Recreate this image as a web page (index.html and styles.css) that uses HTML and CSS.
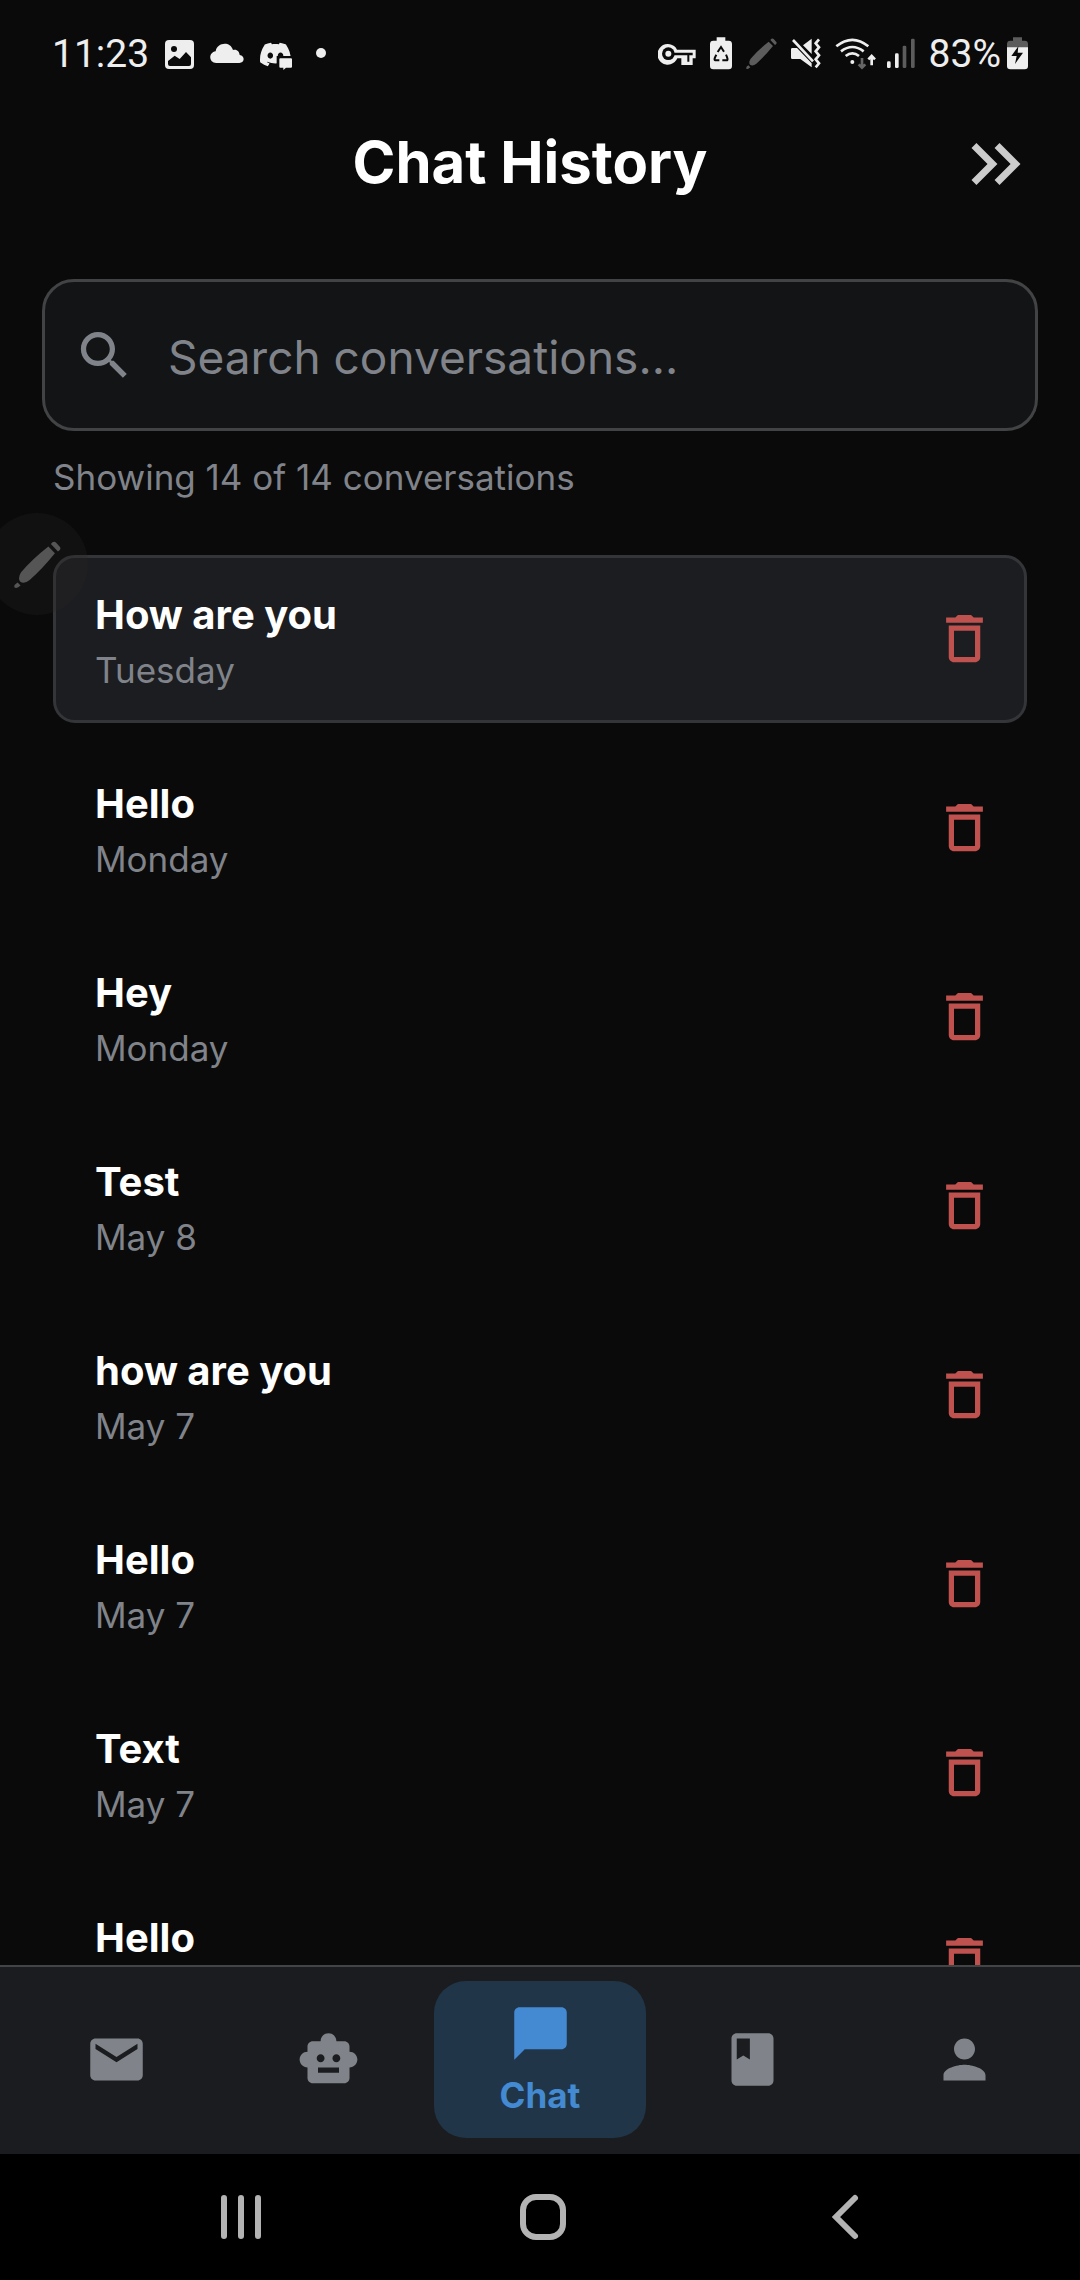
FILE: index.html
```html
<!DOCTYPE html>
<html lang="en">
<head>
<meta charset="utf-8">
<meta name="viewport" content="width=device-width, initial-scale=1">
<title>Chat History</title>
<link rel="stylesheet" href="styles.css">
</head>
<body>
<svg class="sprite" aria-hidden="true">
  <symbol id="trash" viewBox="0 0 24 24"><path d="M16 9v10H8V9zm-1.500-6h-5l-1 1H5v2h14V4h-3.500zM18 7H6v12c0 1.100.9 2 2 2h8c1.100 0 2-.9 2-2z"/></symbol>
  <symbol id="pen" viewBox="0 0 93 93"><path d="M68 11L81 24Q55 56 31 77Q20 86 12 80Q7 73 14 62Q36 36 68 11zM73 6Q78-1 83 3L91 12Q94 17 87 21zM7 82L13 88Q6 95 1 92Q-1 87 7 82z"/></symbol>
</svg>

<header class="status">
  <div class="status-left">
    <time class="clock">11:23</time>
    <svg class="s-image" viewBox="0 0 87 102"><rect y="12" width="87" height="87" rx="12"/><g class="cut"><circle cx="27" cy="39" r="9"/><path d="M9 84V75L29 59 44 69 63 48 78 64V84Q78 90 72 90H15Q9 90 9 84z"/></g></svg>
    <svg class="s-cloud" viewBox="0 0 102 102"><path d="M19 81C-5 81-5 49 17 46 21 20 60 14 69 42 80 38 88 46 89 57 106 60 104 81 88 81z"/></svg>
    <svg class="s-discord" viewBox="0 0 96 102"><path transform="translate(0 9) scale(3.85)" d="M20.317 4.370a19.791 19.791 0 0 0-4.885-1.515.074.074 0 0 0-.079.037c-.211.375-.445.865-.608 1.250-1.845-.276-3.680-.276-5.487 0-.164-.393-.406-.874-.618-1.250a.077.077 0 0 0-.078-.037 19.736 19.736 0 0 0-4.885 1.515.070.070 0 0 0-.032.028C.533 9.046-.319 13.580.099 18.058a.082.082 0 0 0 .031.056c2.053 1.508 4.041 2.423 5.993 3.029a.078.078 0 0 0 .084-.028c.462-.630.873-1.295 1.226-1.994a.076.076 0 0 0-.042-.106c-.653-.248-1.274-.550-1.872-.892a.077.077 0 0 1-.008-.128c.126-.094.252-.192.372-.291a.074.074 0 0 1 .078-.011c3.928 1.793 8.180 1.793 12.061 0l.079.010c.120.099.246.198.373.292a.077.077 0 0 1-.007.128 12.299 12.299 0 0 1-1.873.891.077.077 0 0 0-.041.107c.360.698.772 1.363 1.225 1.993a.076.076 0 0 0 .084.029c1.961-.607 3.950-1.522 6.002-3.029a.077.077 0 0 0 .031-.055c.500-5.177-.838-9.674-3.549-13.660zM8.020 15.331c-1.183 0-2.157-1.086-2.157-2.419s.956-2.419 2.157-2.419c1.211 0 2.176 1.095 2.157 2.419 0 1.333-.956 2.419-2.157 2.419zm7.975 0c-1.183 0-2.157-1.086-2.157-2.419s.955-2.419 2.157-2.419c1.211 0 2.176 1.095 2.157 2.419 0 1.333-.946 2.419-2.157 2.419z"/><path class="cut" d="M50 60H96V102H50z"/><path d="M61 67H93Q96 67 96 70V92Q96 95 93 95H78L70 102V95H61Q58 95 58 92V70Q58 67 61 67z"/></svg>
    <span class="dot"></span>
  </div>
  <div class="status-right">
    <svg class="s-key" viewBox="0 0 114 102"><path d="M57 41H113V67H104V87H70V67H58A31 31 0 1 1 57 41z"/><circle class="cut" cx="31" cy="53" r="19"/><path class="cut" d="M46 50H104V58H94V77H88V58H46z"/><circle cx="31" cy="53" r="9"/></svg>
    <svg class="s-saver" viewBox="0 0 66 102"><path d="M20 4H46V14H56Q66 14 66 24V90Q66 100 56 100H10Q0 100 0 90V24Q0 14 10 14H20z"/><path class="cut-line" d="M23 48L33 33 42 47M48 56Q56 73 50 73H37M28 73H16Q10 72 19 56"/></svg>
    <svg class="s-pen"><use href="#pen"/></svg>
    <svg class="s-mute" viewBox="0 0 90 102"><path d="M0 40Q0 36 4 36H18L62 82V94L28 69H4Q0 69 0 65zM36 28L62 8V54z"/><path class="line" d="M6 12L66 76M84 10L74 22 84 34 74 46 84 58 74 70 84 82 74 94"/></svg>
    <svg class="s-wifi" viewBox="0 0 126 102"><path class="line" d="M4 31Q52-8 100 31M18 46Q52 20 86 46M32 60Q52 44 72 60"/><circle cx="52" cy="78" r="6"/><path class="line" d="M110 88V60M100 70L110 60 120 70"/><path class="line faint" d="M81 66V95M71 85L81 95 91 85"/></svg>
    <svg class="s-signal" viewBox="0 0 84 102"><rect y="76" width="11" height="20" rx="4"/><rect x="24" y="52" width="11" height="44" rx="4"/><rect class="faint-fill" x="47" y="29" width="11" height="67" rx="4"/><rect class="faint-fill" x="72" y="8" width="11" height="88" rx="4"/></svg>
    <span class="battery-text">83%</span>
    <svg class="s-battery" viewBox="0 0 63 102"><path class="faint-fill" d="M18 4H45V14H53Q63 14 63 24V40H0V24Q0 14 10 14H18z"/><path d="M0 34H63V90Q63 100 53 100H10Q0 100 0 90z"/><path class="cut" d="M34 31L13 60H29L24 84 48 50H32z"/></svg>
  </div>
</header>

<header class="app-bar">
  <h1>Chat History</h1>
  <button class="expand" aria-label="Close history"><svg viewBox="0 0 24 24"><path d="M6.410 6 5 7.410 9.580 12 5 16.590 6.410 18l6-6zM13 6 11.590 7.410 16.170 12 11.590 16.590 13 18l6-6z"/></svg></button>
</header>

<main>
  <label class="search">
    <svg class="icon" viewBox="0 0 24 24"><path d="M15.500 14h-.790l-.280-.270C15.410 12.590 16 11.110 16 9.500 16 5.910 13.090 3 9.500 3S3 5.910 3 9.500 5.910 16 9.500 16c1.610 0 3.090-.590 4.230-1.570l.270.280v.790l5 4.990L20.490 19zm-6 0C7.010 14 5 11.990 5 9.500S7.010 5 9.500 5 14 7.010 14 9.500 11.990 14 9.500 14"/></svg>
    <input type="search" placeholder="Search conversations..." aria-label="Search conversations">
  </label>
  <p class="count">Showing 14 of 14 conversations</p>
  <ul class="list">
    <li class="item selected"><div><h2>How are you</h2><p>Tuesday</p></div><button aria-label="Delete conversation"><svg class="icon"><use href="#trash"/></svg></button></li>
    <li class="item"><div><h2>Hello</h2><p>Monday</p></div><button aria-label="Delete conversation"><svg class="icon"><use href="#trash"/></svg></button></li>
    <li class="item"><div><h2>Hey</h2><p>Monday</p></div><button aria-label="Delete conversation"><svg class="icon"><use href="#trash"/></svg></button></li>
    <li class="item"><div><h2>Test</h2><p>May 8</p></div><button aria-label="Delete conversation"><svg class="icon"><use href="#trash"/></svg></button></li>
    <li class="item"><div><h2>how are you</h2><p>May 7</p></div><button aria-label="Delete conversation"><svg class="icon"><use href="#trash"/></svg></button></li>
    <li class="item"><div><h2>Hello</h2><p>May 7</p></div><button aria-label="Delete conversation"><svg class="icon"><use href="#trash"/></svg></button></li>
    <li class="item"><div><h2>Text</h2><p>May 7</p></div><button aria-label="Delete conversation"><svg class="icon"><use href="#trash"/></svg></button></li>
    <li class="item"><div><h2>Hello</h2></div><button aria-label="Delete conversation"><svg class="icon"><use href="#trash"/></svg></button></li>
  </ul>
</main>

<nav class="tabs">
  <a href="#mail" aria-label="Mail"><svg class="icon" viewBox="0 0 24 24"><path d="M20 4H4c-1.100 0-1.990.9-1.990 2L2 18c0 1.100.9 2 2 2h16c1.100 0 2-.9 2-2V6c0-1.100-.9-2-2-2m0 4-8 5-8-5V6l8 5 8-5z"/></svg></a>
  <a href="#assistant" aria-label="Assistant"><svg class="icon" viewBox="0 0 24 24"><path d="M20 9V7c0-1.100-.9-2-2-2h-3c0-1.660-1.340-3-3-3S9 3.340 9 5H6c-1.100 0-2 .9-2 2v2c-1.660 0-3 1.340-3 3s1.340 3 3 3v4c0 1.100.9 2 2 2h12c1.100 0 2-.9 2-2v-4c1.660 0 3-1.340 3-3s-1.340-3-3-3M7.500 11.500c0-.830.670-1.500 1.500-1.500s1.500.670 1.500 1.500S9.830 13 9 13s-1.500-.670-1.500-1.500M16 17H8v-2h8zm-1-4c-.830 0-1.500-.670-1.500-1.500S14.170 10 15 10s1.500.670 1.500 1.500S15.830 13 15 13"/></svg></a>
  <a href="#chat" class="active" aria-current="page"><svg class="icon" viewBox="0 0 24 24"><path d="M20 2H4c-1.100 0-2 .9-2 2v18l4-4h14c1.100 0 2-.9 2-2V4c0-1.100-.9-2-2-2"/></svg><span>Chat</span></a>
  <a href="#journal" aria-label="Journal"><svg class="icon" viewBox="0 0 24 24"><path d="M18 2H6c-1.100 0-2 .9-2 2v16c0 1.100.9 2 2 2h12c1.100 0 2-.9 2-2V4c0-1.100-.9-2-2-2M6 4h5v8l-2.500-1.500L6 12z"/></svg></a>
  <a href="#profile" aria-label="Profile"><svg class="icon" viewBox="0 0 24 24"><path d="M12 12c2.210 0 4-1.790 4-4s-1.790-4-4-4-4 1.790-4 4 1.790 4 4 4m0 2c-2.670 0-8 1.340-8 4v2h16v-2c0-2.660-5.330-4-8-4"/></svg></a>
</nav>

<footer class="system">
  <button aria-label="Recent apps"><svg viewBox="0 0 48 48"><path d="M7 5V43M24 5V43M41 5V43"/></svg></button>
  <button aria-label="Home"><svg viewBox="0 0 48 48"><rect x="4" y="4" width="40" height="40" rx="13"/></svg></button>
  <button aria-label="Back"><svg viewBox="0 0 48 48"><path d="M34 5L15 24 34 43"/></svg></button>
</footer>

<button class="edge-handle" aria-label="Open pen tools"><svg><use href="#pen"/></svg></button>
</body>
</html>
```
FILE: styles.css
```css
* {
  box-sizing: border-box;
  margin: 0;
  padding: 0;
}

body {
  display: flex;
  flex-direction: column;
  height: 100vh;
  overflow: hidden;
  background: #0a0a0a;
  color: #fff;
  font-family: Inter, "Noto Sans", sans-serif;
}

button {
  border: 0;
  background: none;
  color: inherit;
  font: inherit;
}

svg {
  display: block;
  flex: none;
  fill: currentColor;
}

.sprite {
  position: absolute;
  width: 0;
  height: 0;
}

.icon {
  width: 63px;
  height: 63px;
}

/* Status bar */
.status {
  display: flex;
  justify-content: space-between;
  flex: none;
  height: 106px;
  padding: 0 52px;
  color: #eee;
  font: 39px/46px Roboto, sans-serif;
}

.status-left,
.status-right {
  display: flex;
  align-items: center;
}

.status-left { gap: 16px; }
.status-right { gap: 14px; }
.status svg { height: 34px; }
.status .cut { fill: #0a0a0a; }
.status .line { fill: none; stroke: currentColor; stroke-width: 8px; }
.status .cut-line { fill: none; stroke: #0a0a0a; stroke-width: 6px; }
.status .faint { stroke: #666; }
.status .faint-fill { fill: #5c5c5c; }
.clock,
.battery-text { padding-top: 2px; }
.s-image { width: 29px; }
.s-cloud { width: 34px; }
.s-discord { width: 32px; }
.s-key { width: 38px; }
.s-saver { width: 22px; }
.status .s-pen { width: 31px; height: 31px; color: #5c5c5c; }
.s-mute { width: 30px; }
.s-wifi { width: 42px; }
.s-signal { width: 28px; margin-left: -4px; }
.s-battery { width: 21px; margin-left: -8px; }

.dot {
  width: 10px;
  height: 10px;
  margin-left: 8px;
  border-radius: 50%;
  background: currentColor;
}

/* App bar */
.app-bar {
  display: grid;
  grid-template-columns: 64px 1fr 84px;
  align-items: center;
  flex: none;
  height: 116px;
  padding: 0 42px;
}

.app-bar h1 {
  grid-column: 2;
  padding-bottom: 4px;
  font-size: 58px;
  font-weight: 700;
  line-height: 72px;
  text-align: center;
}

.expand { color: #ccc; }
.expand svg { width: 84px; height: 84px; }

/* Conversations */
main {
  display: flex;
  flex-direction: column;
  flex: 1;
  min-height: 0;
  overflow: hidden;
  padding-top: 57px;
}

.search {
  display: flex;
  align-items: center;
  flex: none;
  gap: 32px;
  height: 152px;
  margin: 0 42px;
  padding: 0 28px;
  border: 3px solid #424344;
  border-radius: 32px;
  background: #131416;
  color: #80848a;
}

.search input {
  flex: 1;
  min-width: 0;
  padding-top: 4px;
  border: 0;
  outline: 0;
  background: none;
  color: #fff;
  font: 400 46px/56px Inter, sans-serif;
}

.search input::placeholder {
  color: #80848a;
  opacity: 1;
}

.count {
  padding: 24px 53px 0;
  color: #80848a;
  font-size: 35px;
  line-height: 44px;
}

.list {
  display: flex;
  flex-direction: column;
  gap: 21px;
  padding: 56px 53px 0;
  list-style: none;
}

.item {
  display: flex;
  align-items: flex-start;
  justify-content: space-between;
  flex: none;
  height: 168px;
  padding: 29px 28px 0 39px;
  border: 3px solid transparent;
  border-radius: 22px;
}

.item.selected {
  border-color: #343538;
  background: #1c1d20;
}

.item h2 {
  font-size: 40px;
  font-weight: 700;
  line-height: 56px;
}

.item p {
  color: #80848a;
  font-size: 35px;
  line-height: 54px;
}

.item button {
  padding-top: 20px;
  color: #bf524e;
}

/* Bottom tabs */
.tabs {
  display: flex;
  flex: none;
  height: 189px;
  padding: 14px 10px 16px;
  border-top: 2px solid #434446;
  background: #1b1c1f;
}

.tabs a {
  display: flex;
  flex: 1;
  flex-direction: column;
  align-items: center;
  justify-content: center;
  gap: 8px;
  border-radius: 32px;
  color: #80848a;
  font-size: 35px;
  font-weight: 700;
  line-height: 44px;
  text-decoration: none;
}

.tabs .active {
  background: #203548;
  color: #438ad2;
}

/* System navigation */
.system {
  display: flex;
  align-items: center;
  justify-content: space-around;
  flex: none;
  height: 126px;
  padding: 0 84px 0 90px;
  background: #000;
  color: #b3b3b3;
}

.system svg {
  width: 48px;
  height: 48px;
  fill: none;
  stroke: currentColor;
  stroke-width: 6px;
  stroke-linecap: round;
}

/* Floating pen handle over the left edge */
.edge-handle {
  position: absolute;
  top: 513px;
  left: -14px;
  display: grid;
  place-items: center;
  width: 102px;
  height: 102px;
  border-radius: 50%;
  background: rgba(40, 40, 40, 0.25);
  color: #555;
}

.edge-handle svg { width: 47px; height: 47px; }
```
